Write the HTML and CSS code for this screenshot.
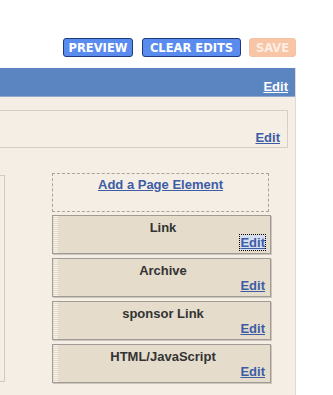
FILE: index.html
```html
<!DOCTYPE html>
<html lang="en">
<head>
  <meta charset="UTF-8">
  <meta name="viewport" content="width=device-width, initial-scale=1.0">
  <title>Page Elements</title>
  <link rel="stylesheet" href="styles.css">
</head>
<body>
  <div class="toolbar">
    <button class="btn btn-preview">PREVIEW</button>
    <button class="btn btn-clear">CLEAR EDITS</button>
    <button class="btn btn-save">SAVE</button>
  </div>

  <div class="panel">
    <div class="panel-head">
      <a href="#" class="edit edit-light">Edit</a>
    </div>

    <div class="header-box">
      <a href="#" class="edit">Edit</a>
    </div>

    <div class="columns">
      <div class="main-col"></div>

      <div class="sidebar">
        <div class="add-element">
          <a href="#">Add a Page Element</a>
        </div>

        <div class="widget">
          <div class="widget-title">Link</div>
          <div class="widget-foot"><a href="#" class="edit focused">Edit</a></div>
        </div>
        <div class="widget">
          <div class="widget-title">Archive</div>
          <div class="widget-foot"><a href="#" class="edit">Edit</a></div>
        </div>
        <div class="widget">
          <div class="widget-title">sponsor Link</div>
          <div class="widget-foot"><a href="#" class="edit">Edit</a></div>
        </div>
        <div class="widget">
          <div class="widget-title">HTML/JavaScript</div>
          <div class="widget-foot"><a href="#" class="edit">Edit</a></div>
        </div>
      </div>
    </div>
  </div>
</body>
</html>
```

FILE: styles.css
```css
body {
  margin: 0;
  font-family: "Liberation Sans", Arial, sans-serif;
  background-color: #fff;
  overflow: hidden;
}
.toolbar {
  display: flex;
  justify-content: flex-end;
  width: 296px;
  padding-top: 38px;
}
.btn {
  height: 19px;
  padding: 0;
  font-family: "DejaVu Sans", Verdana, sans-serif;
  font-size: 11.5px;
  font-weight: bold;
  color: #fff;
  background-color: #5a8bee;
  border: 1px solid #1d3b7a;
  border-radius: 3px;
  cursor: pointer;
}
.btn-preview {
  width: 70px;
}
.btn-clear {
  width: 99px;
  margin-left: 9px;
}
.btn-save {
  width: 47px;
  margin-left: 8px;
  color: #fdeee4;
  background-color: #f8c6a6;
  border-color: #f2c3a4;
}
.panel {
  width: 295px;
  height: 327px;
  margin-top: 11px;
  background-color: #f4eee5;
  border-right: 1px solid #e2dace;
}
.panel-head {
  height: 29px;
  box-sizing: border-box;
  padding: 9px 7px 0 0;
  text-align: right;
  background-color: #5a85c1;
  border-bottom: 1px solid #8fa9cf;
}
.edit {
  font-size: 13px;
  font-weight: bold;
  line-height: 15px;
  color: #3d5ca6;
}
.edit-light {
  color: #fff;
}
.focused {
  background-color: #d6dff0;
  outline: 1px dotted #000;
}
.header-box {
  display: flex;
  justify-content: flex-end;
  align-items: flex-end;
  box-sizing: border-box;
  width: 288px;
  height: 38px;
  margin-top: 13px;
  padding: 0 7px 2px 0;
  border: 1px solid #d6cec2;
  border-left: none;
}
.columns {
  display: flex;
  align-items: flex-start;
  margin-top: 25px;
}
.main-col {
  width: 4px;
  height: 205px;
  margin-top: 2px;
  border: 1px solid #d2cabd;
  border-left: none;
}
.sidebar {
  width: 219px;
  margin-left: 47px;
}
.add-element {
  box-sizing: border-box;
  width: 217px;
  height: 39px;
  padding-top: 1px;
  text-align: center;
  border: 1px dashed #a8a39b;
}
.add-element a {
  font-size: 13px;
  font-weight: bold;
  line-height: 15px;
  color: #3d5ca6;
}
.widget {
  box-sizing: border-box;
  height: 39px;
  margin-top: 3px;
  margin-bottom: 4px;
  padding: 5px 5px 0 8px;
  background-color: #e5dccc;
  background-image: repeating-linear-gradient(0deg, #f6f1ea 0 1px, transparent 1px 2px);
  background-size: 4px 100%;
  background-position: 1px 0;
  background-repeat: no-repeat;
  border: 1px solid #a09b94;
  box-shadow: 1px 1px 0 #cbc5bb;
}
.widget + .widget {
  margin-top: 0;
}
.widget-title {
  font-size: 13px;
  font-weight: bold;
  line-height: 14px;
  text-align: center;
  color: #333;
}
.widget-foot {
  text-align: right;
  line-height: 14px;
}
```
